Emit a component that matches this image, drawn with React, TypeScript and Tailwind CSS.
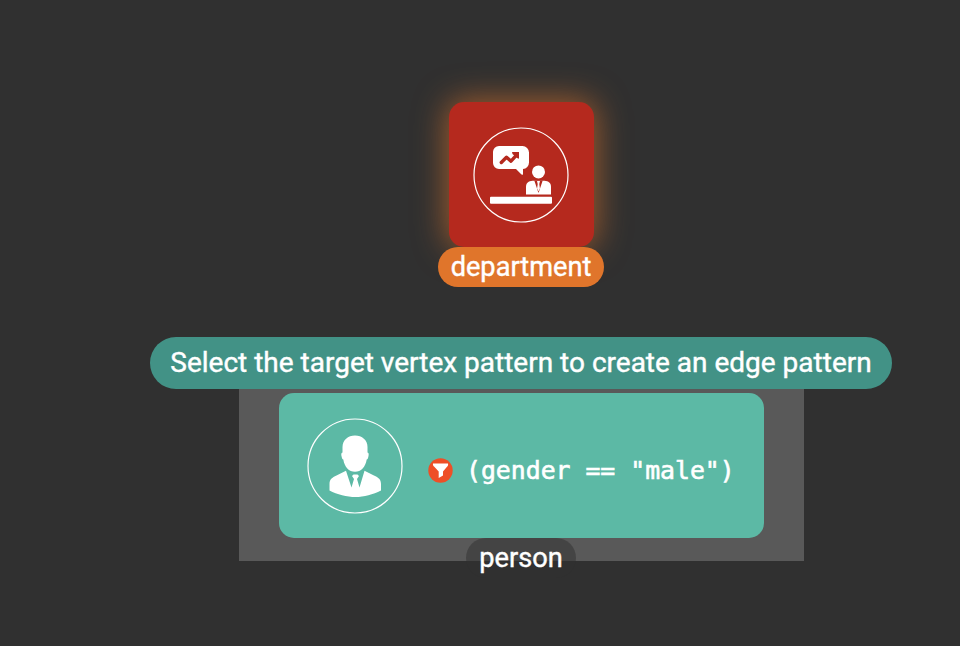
function DepartmentIcon() {
  return (
    <svg className="size-24" viewBox="0 0 96 96" fill="none">
      <circle cx="48" cy="48" r="47" stroke="#fff" strokeWidth="1.200" />
      <path
        d="M26 19h23.500a6.500 6.500 0 0 1 6.500 6.500v10a6.500 6.500 0 0 1-6 6.500v5.800L48.500 47.500L43 42H26a6 6 0 0 1-6-6V25a6 6 0 0 1 6-6Z"
        fill="#fff"
      />
      <path d="M28.300 35.500l5.200-5.300 4.500 4 5.500-6" stroke="#b5291e" strokeWidth="3.400" strokeLinecap="round" strokeLinejoin="round" />
      <path d="M39 25h7v6.800l-2-.8-4.500-4Z" fill="#b5291e" />
      <circle cx="65.500" cy="44.900" r="6.500" fill="#fff" />
      <path d="M53 67.500V60c0-4 2.500-6 6.500-6.200h12c4 .2 6.500 2.200 6.500 6.200v7.500Z" fill="#fff" />
      <path d="M61.300 53.500 65.500 66 69.700 53.500Z" fill="#b5291e" />
      <path d="M64 54h3l-.7 3 .6 4.500-1.400 2.700-1.400-2.700.6-4.500Z" fill="#fff" />
      <rect x="17" y="69.800" width="62" height="7" rx="1" fill="#fff" />
    </svg>
  );
}

function PersonIcon() {
  return (
    <svg className="size-24" viewBox="0 0 96 96" fill="none">
      <circle cx="48" cy="48" r="47" stroke="#fff" strokeWidth="1.200" />
      <path
        d="M48 17.500c7 0 12.500 4.500 12.500 11.500v5.500c1.600.2 1.300 2.200.9 4-.4 1.700-.8 3-1.700 3C58.500 49 54 53.800 48 53.800S37.500 49 36.300 41.500c-.9 0-1.300-1.300-1.700-3-.4-1.800-.7-3.800.9-4V29c0-7 5.500-11.500 12.500-11.500Z"
        fill="#fff"
      />
      <path
        d="M39 52.800 44.500 69.500 47 61l-2-3 1.500-1.500h4L52 58l-2 3 2.500 8.500L57.500 52.800 67 57.500c4.500 2 7 4 7 8.500v6.500C66 76.500 57 79 48.500 79S30 76.500 22.500 72.500V66c0-4.500 2.500-6.500 7-8.500Z"
        fill="#fff"
      />
    </svg>
  );
}

function FilterBadge() {
  return (
    <svg className="size-[25px]" viewBox="0 0 25 25">
      <circle cx="12.500" cy="12.500" r="12.200" fill="#ee4f27" />
      <path d="M5 5.500h15c.4 1.500-.2 2.500-1 3.300l-4 4.700v4L10.700 20v-6.500L6.300 8.800c-.9-.8-1.600-1.800-1.300-3.300Z" fill="#fff" />
    </svg>
  );
}

export default function App() {
  return (
    <main className="h-[646px] w-[960px] overflow-hidden bg-[#303030] pl-[82px] pt-[102px] font-['Roboto',sans-serif] text-white [-webkit-text-stroke:0.4px_white]">
      <div className="flex w-[878px] flex-col items-center">
        <section className="flex flex-col items-center">
          <div className="flex size-[145px] items-center justify-center rounded-[15px] bg-[#b5291e] shadow-[0_0_32px_2px_rgba(224,117,43,0.65)]">
            <DepartmentIcon />
          </div>
          <div className="z-10 flex h-10 w-[166px] items-center justify-center rounded-full bg-[#e0752b] text-[27.200px]">
            department
          </div>
        </section>

        <div className="z-10 mt-[50px] flex h-[52px] w-[742px] items-center justify-center whitespace-nowrap rounded-full bg-[#429286] text-[28px]">
          Select the target vertex pattern to create an edge pattern
        </div>

        <section className="flex h-[172px] w-[565px] flex-col items-center bg-[#595959] pt-1">
          <div className="ml-px flex h-[145px] w-[485px] shrink-0 items-center rounded-[15px] bg-[#5cb9a5] pl-7">
            <PersonIcon />
            <div className="ml-[25px] mt-2.5 flex items-center gap-3.5">
              <div className="-mt-px">
                <FilterBadge />
              </div>
              <code className="-ml-px whitespace-pre font-['DejaVu_Sans_Mono',monospace] text-[24.800px] leading-8 [-webkit-text-stroke:0.600px_white]">
                (gender == "male")
              </code>
            </div>
          </div>
          <div className="flex h-10 w-[110px] shrink-0 items-center justify-center rounded-full bg-[#303030]/50 text-[27.200px]">
            person
          </div>
        </section>
      </div>
    </main>
  );
}
